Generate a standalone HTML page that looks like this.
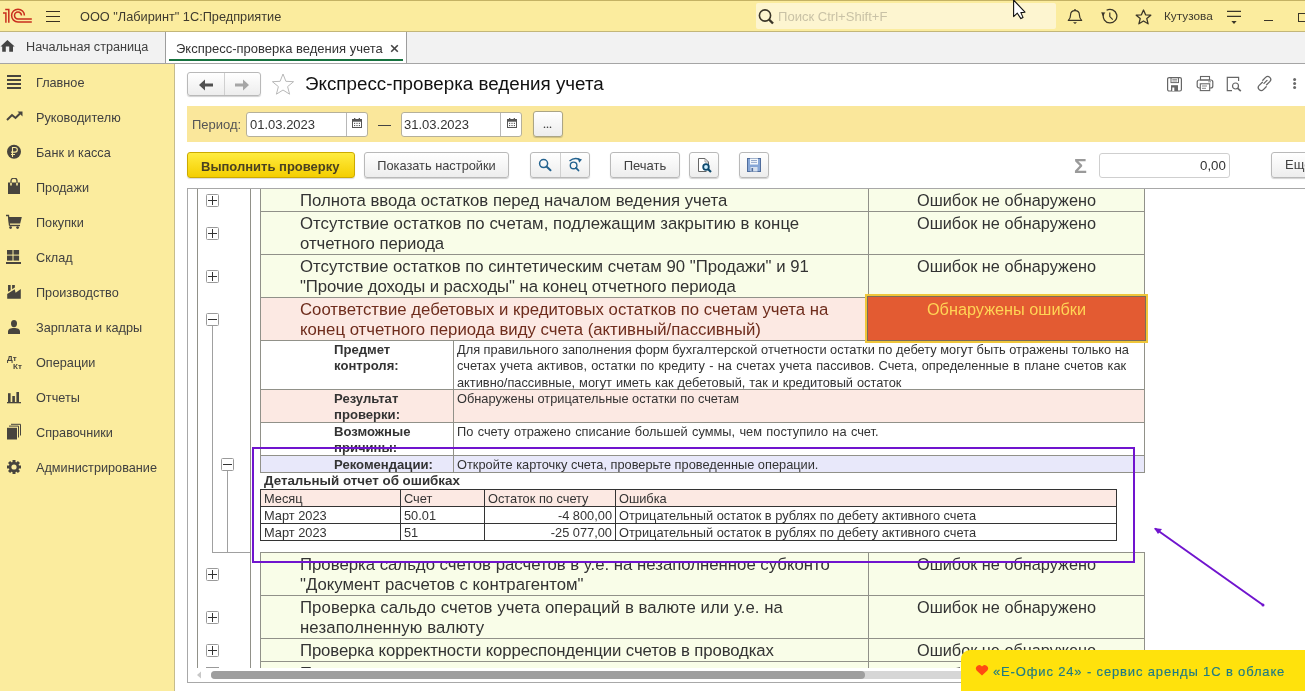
<!DOCTYPE html>
<html><head><meta charset="utf-8">
<style>
*{box-sizing:border-box;margin:0;padding:0}
html,body{width:1305px;height:691px;overflow:hidden;background:#fff;font-family:"Liberation Sans",sans-serif;color:#333}
.a{position:absolute}
.t{position:absolute;white-space:nowrap}
.a,.t,.si,.rowtxt,.ok,.lbl,.val,.btn{will-change:transform}
#top{left:0;top:0;width:1305px;height:32px;background:#FBEC9E;border-top:1px solid #C4B264;border-bottom:1px solid #C3B679}
#tabs{left:0;top:32px;width:1305px;height:32px;background:#F2F2F2;border-bottom:1px solid #A5A5A5}
#side{left:0;top:64px;width:175px;height:627px;background:#FBEC9E;border-right:1px solid #C6BC8C}
.si{position:absolute;left:36px;font-size:12.7px;color:#404040;white-space:nowrap}
.btn{position:absolute;border:1px solid #B9B9B9;border-radius:3px;background:linear-gradient(#FFFFFF,#EDEDED);box-shadow:0 1px 1px rgba(0,0,0,.18);font-size:13px;color:#404040;text-align:center}
.grid{position:absolute;background:#999}
.rowtxt{position:absolute;font-size:16.75px;color:#333;white-space:nowrap;line-height:20px}
.ok{position:absolute;font-size:16.3px;color:#333;white-space:nowrap;text-align:center;line-height:20px}
.lbl{position:absolute;font-size:13.1px;font-weight:bold;color:#333;line-height:16px}
.val{position:absolute;font-size:12.8px;color:#333;line-height:16.4px;white-space:nowrap}
.box{position:absolute;width:13px;height:13px;border:1px solid #9A9A9A;border-radius:1.5px;background:#fff}
.box:before{content:"";position:absolute;left:1.2px;top:4.9px;width:8.6px;height:1.3px;background:#333}
.box.p:after{content:"";position:absolute;left:4.85px;top:1.2px;width:1.3px;height:8.6px;background:#333}
</style></head><body>

<!-- TOP BAR -->
<div id="top" class="a"></div>
<svg class="a" style="left:0px;top:4px" width="36" height="24" viewBox="0 0 36 24"><g fill="none" stroke="#C92E1E" stroke-width="1.5"><path d="M3 9 H5.9 V18.8 M5.2 5.6 H8.8 V18.8"/><path d="M31.8 18 H18 A6.4 6.4 0 1 1 24.4 11.6"/><path d="M31.8 15.1 H18 A3.5 3.5 0 1 1 21.5 11.6"/></g></svg>
<div class="a" style="left:46px;top:10.7px;width:14px;height:1.3px;background:#3a3020"></div>
<div class="a" style="left:46px;top:15.7px;width:14px;height:1.3px;background:#3a3020"></div>
<div class="a" style="left:46px;top:20.7px;width:14px;height:1.3px;background:#3a3020"></div>
<div class="t" style="left:80px;top:9px;font-size:12.75px;color:#3E3A2E">ООО "Лабиринт" 1С:Предприятие</div>

<div class="a" style="left:756px;top:3px;width:300px;height:26px;background:#FDF5D0;border-radius:2px"></div>
<svg class="a" style="left:758px;top:9px" width="17" height="16" viewBox="0 0 17 16"><circle cx="7" cy="6.5" r="5.6" fill="none" stroke="#3a3528" stroke-width="1.6"/><path d="M11 10.5 L15 14.5" stroke="#3a3528" stroke-width="2.4"/></svg>
<div class="t" style="left:778px;top:9px;font-size:13.05px;color:#C9C2A6">Поиск Ctrl+Shift+F</div>

<!-- cursor -->
<svg class="a" style="left:1012px;top:0px" width="15" height="20" viewBox="0 0 15 20"><path d="M1.6 0 V16.6 L5.3 13.2 L8.9 18.6 L11 17.4 L8.9 12.6 L13 12.2 Z" fill="#fff" stroke="#111" stroke-width="1.1" stroke-linejoin="round"/></svg>
<!-- bell -->
<svg class="a" style="left:1067px;top:8px" width="16" height="17" viewBox="0 0 16 17"><circle cx="8" cy="1.8" r="0.9" fill="#3a3528"/><path d="M1.3 12.4 C3 10.8 3.6 9.2 3.6 6.8 C3.6 4.3 5.6 2.7 8 2.7 C10.4 2.7 12.4 4.3 12.4 6.8 C12.4 9.2 13 10.8 14.7 12.4 Z" fill="none" stroke="#3a3528" stroke-width="1.2" stroke-linejoin="round"/><path d="M6 14.2 H10 L8 15.9 Z" fill="#3a3528"/></svg>
<!-- history -->
<svg class="a" style="left:1100px;top:8px" width="18" height="17" viewBox="0 0 18 17"><path d="M3.6 6 A6.8 6.8 0 1 0 6.6 2.3" fill="none" stroke="#3a3528" stroke-width="1.3"/><path d="M1.2 4.2 L5.4 4.6 L2.6 8 Z" fill="#3a3528"/><path d="M9.8 4.6 V8.6 L12.8 11.6" fill="none" stroke="#3a3528" stroke-width="1.2"/></svg>
<!-- star -->
<svg class="a" style="left:1135px;top:8.5px" width="17" height="16" viewBox="0 0 17 16"><path d="M8.5 1 L10.6 5.8 L15.8 6.2 L11.8 9.6 L13.1 14.8 L8.5 12 L3.9 14.8 L5.2 9.6 L1.2 6.2 L6.4 5.8 Z" fill="none" stroke="#3a3528" stroke-width="1.3" stroke-linejoin="round"/></svg>
<div class="t" style="left:1164px;top:9px;font-size:11.8px;color:#3E3A2E">Кутузова</div>
<!-- filter -->
<svg class="a" style="left:1226px;top:9px" width="16" height="16" viewBox="0 0 16 16"><path d="M1 2.4 H15 M1 7.3 H15" stroke="#3a3528" stroke-width="1.2"/><path d="M5.4 12 H10.6 L8 15 Z" fill="#3a3528"/></svg>
<div class="a" style="left:1264px;top:20px;width:9px;height:1.2px;background:#3a3528"></div>
<div class="a" style="left:1298px;top:12.5px;width:10px;height:8.5px;border:1.2px solid #3a3528"></div>

<!-- TAB BAR -->
<div id="tabs" class="a"></div>
<svg class="a" style="left:0px;top:40px" width="16" height="13" viewBox="0 0 16 13"><path d="M7.4 0 L14.7 6.6 H13 V11.8 H9.2 V6.6 H5.8 V11.8 H2.2 V6.6 H0.5 Z" fill="#454545"/></svg>
<div class="t" style="left:26px;top:39.5px;font-size:12.65px;color:#404040">Начальная страница</div>
<div class="a" style="left:165px;top:32px;width:242px;height:31px;background:#fff;border-left:1px solid #9d9d9d;border-right:1px solid #9d9d9d"></div>
<div class="t" style="left:176px;top:40.5px;font-size:13px;color:#333">Экспресс-проверка ведения учета</div>
<svg class="a" style="left:390px;top:43.5px" width="9" height="9" viewBox="0 0 9 9"><path d="M1.2 1.2 L7.8 7.8 M7.8 1.2 L1.2 7.8" stroke="#444" stroke-width="1.6"/></svg>
<div class="a" style="left:169px;top:59px;width:234px;height:2px;background:#17723F"></div>

<!-- SIDEBAR -->
<div id="side" class="a"></div>
<div class="si" style="top:76px">Главное</div>
<div class="si" style="top:111px">Руководителю</div>
<div class="si" style="top:146px">Банк и касса</div>
<div class="si" style="top:181px">Продажи</div>
<div class="si" style="top:216px">Покупки</div>
<div class="si" style="top:251px">Склад</div>
<div class="si" style="top:286px">Производство</div>
<div class="si" style="top:321px">Зарплата и кадры</div>
<div class="si" style="top:356px">Операции</div>
<div class="si" style="top:391px">Отчеты</div>
<div class="si" style="top:426px">Справочники</div>
<div class="si" style="top:461px">Администрирование</div>


<!-- sidebar icons -->
<svg class="a" style="left:6px;top:74px" width="17" height="16" viewBox="0 0 17 16"><path d="M1 2.1 H15 M1 6 H15 M1 9.9 H15 M1 14 H15" stroke="#47443E" stroke-width="2"/></svg>
<svg class="a" style="left:6px;top:110px" width="18" height="12" viewBox="0 0 18 12"><path d="M1 10 L6 5 L9.5 8 L14 3.5" fill="none" stroke="#47443E" stroke-width="2"/><path d="M11.5 1.5 H16.5 V6.5 Z" fill="#47443E"/></svg>
<svg class="a" style="left:6px;top:144px" width="16" height="16" viewBox="0 0 16 16"><circle cx="8" cy="7.8" r="7" fill="#47443E"/><path d="M6.5 13 V3.5 H9 A2.3 2.3 0 0 1 9 8.1 H5 M5 10.5 H9" fill="none" stroke="#FBEC9E" stroke-width="1.1"/></svg>
<svg class="a" style="left:6px;top:178px" width="16" height="17" viewBox="0 0 16 17"><path d="M5 5 V3 A3 3 0 0 1 11 3 V5" fill="none" stroke="#47443E" stroke-width="1.3"/><path d="M2 4.5 H4.2 V7.5 H5.8 V4.5 H10.2 V7.5 H11.8 V4.5 H14 V16 H2 Z" fill="#47443E"/></svg>
<svg class="a" style="left:5px;top:214px" width="18" height="16" viewBox="0 0 18 16"><path d="M1 1.5 H3.5 L4.5 11.5" fill="none" stroke="#47443E" stroke-width="1.3"/><path d="M3.2 3 H16.8 L15.2 9.5 H4 Z" fill="#47443E"/><path d="M4.3 11.5 H15" stroke="#47443E" stroke-width="1.4"/><circle cx="5.6" cy="13.6" r="1.4" fill="#47443E"/><circle cx="12.6" cy="13.6" r="1.4" fill="#47443E"/></svg>
<svg class="a" style="left:5px;top:249px" width="18" height="16" viewBox="0 0 18 16"><rect x="2" y="1" width="5.5" height="4.6" fill="#47443E"/><rect x="8.5" y="1" width="5.6" height="4.6" fill="#47443E"/><rect x="2" y="6.6" width="5.5" height="5" fill="#47443E"/><rect x="8.5" y="6.6" width="5.6" height="5" fill="#47443E"/><rect x="1" y="13" width="15" height="2" fill="#47443E"/></svg>
<svg class="a" style="left:6px;top:284px" width="16" height="16" viewBox="0 0 16 16"><path d="M2.05 1 H4.65 V6.14 L2.05 7.77 Z M6.1 1 H8.85 V3.5 L6.1 5.23 Z M1.2 14.8 V9.9 L8.7 5.2 L9.6 8.7 L14.8 5 V14.8 Z" fill="#47443E"/></svg>
<svg class="a" style="left:6px;top:319px" width="16" height="16" viewBox="0 0 16 16"><ellipse cx="8" cy="4.6" rx="3" ry="3.6" fill="#47443E"/><path d="M2 15 V12.5 C2 10 4.5 9 8 9 C11.5 9 14 10 14 12.5 V15 Z" fill="#47443E"/></svg>
<div class="t" style="left:7px;top:354px;font-size:8px;font-weight:bold;color:#47443E">Дт</div>
<div class="t" style="left:13px;top:362px;font-size:8px;font-weight:bold;color:#47443E">Кт</div>
<svg class="a" style="left:6px;top:390px" width="16" height="14" viewBox="0 0 16 14"><rect x="2" y="3.2" width="2.6" height="9" fill="#47443E"/><rect x="6.3" y="6" width="2.6" height="6.2" fill="#47443E"/><rect x="10.4" y="2" width="2.6" height="10.2" fill="#47443E"/><rect x="1" y="12" width="14" height="1.3" fill="#47443E"/></svg>
<svg class="a" style="left:6px;top:422px" width="16" height="19" viewBox="0 0 16 19"><rect x="1" y="5.8" width="10" height="11.7" fill="#47443E"/><path d="M3 4.1 H12.5 V15.5 M5 2.3 H14.5 V13.5" fill="none" stroke="#47443E" stroke-width="1"/></svg>
<svg class="a" style="left:6px;top:459px" width="16" height="16" viewBox="0 0 16 16"><g fill="#47443E"><rect x="6.5" y="1" width="3" height="14"/><rect x="1" y="6.5" width="14" height="3"/><rect x="6.5" y="1" width="3" height="14" transform="rotate(45 8 8)"/><rect x="6.5" y="1" width="3" height="14" transform="rotate(-45 8 8)"/><circle cx="8" cy="8" r="5.2"/></g><circle cx="8" cy="8" r="2.6" fill="#FBEC9E"/></svg>

<!-- CONTENT HEADER -->
<div class="btn" style="left:187px;top:72px;width:74px;height:24px;border-radius:3px"></div>
<div class="a" style="left:224px;top:73px;width:1px;height:22px;background:#D0D0D0"></div>
<svg class="a" style="left:198px;top:77.6px" width="18" height="14" viewBox="0 0 18 14"><path d="M1 7 L7 1.5 V5.5 H15 V8.5 H7 V12.5 Z" fill="#505050"/></svg>
<svg class="a" style="left:232px;top:77.6px" width="18" height="14" viewBox="0 0 18 14"><path d="M17 7 L11 1.5 V5.5 H3 V8.5 H11 V12.5 Z" fill="#A6A6A6"/></svg>
<svg class="a" style="left:271px;top:73px" width="24" height="23" viewBox="0 0 24 23"><path d="M12 1 L14.9 8.3 L22.6 8.7 L16.6 13.6 L18.6 21.2 L12 17 L5.4 21.2 L7.4 13.6 L1.4 8.7 L9.1 8.3 Z" fill="none" stroke="#B8B8B8" stroke-width="1" stroke-linejoin="round"/></svg>
<div class="t" style="left:305px;top:73px;font-size:18.8px;color:#111">Экспресс-проверка ведения учета</div>

<!-- right header icons -->
<svg class="a" style="left:1166px;top:76px" width="17" height="16" viewBox="0 0 17 16"><rect x="1.6" y="1.6" width="13.8" height="13.4" rx="1.5" fill="none" stroke="#666" stroke-width="1.2"/><rect x="5" y="1.6" width="7.5" height="5" fill="none" stroke="#666" stroke-width="1"/><path d="M6.3 3.6 H11.2 M6.3 5 H11.2" stroke="#666" stroke-width="0.7"/><rect x="5" y="9.2" width="7" height="5.8" fill="#666"/><rect x="6.3" y="11.5" width="2" height="3.5" fill="#fff"/></svg>
<svg class="a" style="left:1196px;top:75px" width="18" height="17" viewBox="0 0 18 17"><rect x="4.5" y="1.5" width="9" height="3.5" fill="none" stroke="#666" stroke-width="1.1"/><rect x="1.2" y="5" width="15.6" height="8" rx="2" fill="none" stroke="#666" stroke-width="1.2"/><rect x="4.3" y="8.8" width="9.4" height="6.8" fill="#fff" stroke="#666" stroke-width="1.1"/><path d="M6 11 H11 M6 13.3 H10" stroke="#666" stroke-width="0.8"/><path d="M12.2 6.8 H15" stroke="#666" stroke-width="0.8"/></svg>
<svg class="a" style="left:1226px;top:76px" width="17" height="16" viewBox="0 0 17 16"><path d="M6 14.6 H1.3 V1.3 H12.6 V5" fill="none" stroke="#666" stroke-width="1.2"/><circle cx="9.5" cy="10" r="3" fill="none" stroke="#666" stroke-width="1.2"/><path d="M11.8 12.3 L14.8 15.2" stroke="#666" stroke-width="1.6"/></svg>
<svg class="a" style="left:1256px;top:75px" width="17" height="17" viewBox="0 0 17 17"><path d="M6.8 5.2 L9.6 2.4 A2.8 2.8 0 0 1 13.8 6.6 L10.6 9.8 M8 8.4 L11 5.4 M10.2 11.8 L7.4 14.6 A2.8 2.8 0 0 1 3.2 10.4 L6.4 7.2" fill="none" stroke="#666" stroke-width="1.3" stroke-linecap="round"/></svg>
<svg class="a" style="left:1292px;top:76px" width="6" height="14" viewBox="0 0 6 14"><circle cx="2.6" cy="3.4" r="1.5" fill="#6a6a6a"/><circle cx="2.6" cy="7.4" r="1.5" fill="#6a6a6a"/><circle cx="2.6" cy="11.4" r="1.5" fill="#6a6a6a"/></svg>

<!-- PERIOD PANEL -->
<div class="a" style="left:187px;top:106px;width:1118px;height:36px;background:#FAE79B"></div>
<div class="t" style="left:192px;top:117px;font-size:13px;color:#555">Период:</div>
<div class="a" style="left:246px;top:112px;width:122px;height:25px;background:#fff;border:1px solid #B5B09A;border-radius:3px"></div>
<div class="a" style="left:346px;top:113px;width:1px;height:23px;background:#B8B8B8"></div>
<div class="t" style="left:250px;top:117px;font-size:13px;color:#333">01.03.2023</div>
<div class="a" style="left:401px;top:112px;width:121px;height:25px;background:#fff;border:1px solid #B5B09A;border-radius:3px"></div>
<div class="a" style="left:500px;top:113px;width:1px;height:23px;background:#B8B8B8"></div>
<div class="t" style="left:404px;top:117px;font-size:13px;color:#333">31.03.2023</div>
<div class="a" style="left:378px;top:124.5px;width:13px;height:1px;background:#444"></div>
<div class="btn" style="left:533px;top:111px;width:30px;height:26px;border-color:#ABA585"></div>
<svg class="a" style="left:540px;top:124px" width="14" height="6" viewBox="0 0 14 6"><circle cx="4.5" cy="3.3" r="0.8" fill="#333"/><circle cx="7.5" cy="3.3" r="0.8" fill="#333"/><circle cx="10.5" cy="3.3" r="0.8" fill="#333"/></svg>


<svg class="a" style="left:352px;top:118px" width="10" height="10" viewBox="0 0 10 10"><rect x="0.5" y="1.5" width="9" height="8" fill="#fff" stroke="#555" stroke-width="1"/><rect x="0.5" y="1.5" width="9" height="2.2" fill="#555"/><rect x="2" y="0" width="1.3" height="2" fill="#555"/><rect x="6.7" y="0" width="1.3" height="2" fill="#555"/><g fill="#555"><rect x="2" y="4.8" width="1.2" height="1.1"/><rect x="4.4" y="4.8" width="1.2" height="1.1"/><rect x="6.8" y="4.8" width="1.2" height="1.1"/><rect x="2" y="7" width="1.2" height="1.1"/><rect x="4.4" y="7" width="1.2" height="1.1"/><rect x="6.8" y="7" width="1.2" height="1.1"/></g></svg>
<svg class="a" style="left:507px;top:118px" width="10" height="10" viewBox="0 0 10 10"><rect x="0.5" y="1.5" width="9" height="8" fill="#fff" stroke="#555" stroke-width="1"/><rect x="0.5" y="1.5" width="9" height="2.2" fill="#555"/><rect x="2" y="0" width="1.3" height="2" fill="#555"/><rect x="6.7" y="0" width="1.3" height="2" fill="#555"/><g fill="#555"><rect x="2" y="4.8" width="1.2" height="1.1"/><rect x="4.4" y="4.8" width="1.2" height="1.1"/><rect x="6.8" y="4.8" width="1.2" height="1.1"/><rect x="2" y="7" width="1.2" height="1.1"/><rect x="4.4" y="7" width="1.2" height="1.1"/><rect x="6.8" y="7" width="1.2" height="1.1"/></g></svg>
<!-- ACTION BAR -->
<div class="a" style="left:187px;top:152px;width:168px;height:26px;border:1px solid #CCAA00;border-radius:3px;background:linear-gradient(#FFEC40,#F4CE00);box-shadow:0 1px 1px rgba(0,0,0,.15)"></div>
<div class="t" style="left:201px;top:158.5px;font-size:13px;font-weight:bold;color:#4A4220">Выполнить проверку</div>
<div class="btn" style="left:364px;top:152px;width:145px;height:26px;line-height:25.5px;font-size:12.8px">Показать настройки</div>
<div class="btn" style="left:530px;top:152px;width:60px;height:26px"></div>
<div class="a" style="left:560px;top:153px;width:1px;height:24px;background:#D0D0D0"></div>
<div class="btn" style="left:610px;top:152px;width:70px;height:26px;line-height:26px">Печать</div>
<div class="btn" style="left:689px;top:152px;width:30px;height:26px"></div>
<div class="btn" style="left:739px;top:152px;width:30px;height:26px"></div>
<div class="t" style="left:1074px;top:154.5px;font-size:19.5px;font-weight:bold;color:#9A9A9A;transform:scaleX(1.1);transform-origin:left">Σ</div>
<div class="a" style="left:1099px;top:153px;width:131px;height:25px;background:#fff;border:1px solid #CFCFCF;border-radius:3px"></div>
<div class="t" style="left:1200px;top:158px;font-size:13.3px;color:#333">0,00</div>
<div class="btn" style="left:1271px;top:152px;width:60px;height:26px;line-height:24px;text-align:left;padding-left:13px">Ещё</div>
<svg class="a" style="left:538px;top:157px" width="15" height="16" viewBox="0 0 15 16"><circle cx="5.6" cy="6.6" r="4" fill="none" stroke="#23628F" stroke-width="1.5"/><path d="M8.5 9.5 L12.5 13.3" stroke="#23628F" stroke-width="2" stroke-linecap="round"/></svg>
<svg class="a" style="left:567px;top:156px" width="17" height="17" viewBox="0 0 17 17"><circle cx="6.6" cy="9.4" r="3.3" fill="none" stroke="#23628F" stroke-width="1.4"/><path d="M9 11.8 L11.5 14.5" stroke="#23628F" stroke-width="1.8" stroke-linecap="round"/><path d="M2.5 5 Q7.5 0.8 12.5 3.6" fill="none" stroke="#23628F" stroke-width="1.5"/><path d="M10.6 2 L15 3.5 L12.2 6.8 Z" fill="#23628F"/></svg>
<svg class="a" style="left:697px;top:157px" width="16" height="17" viewBox="0 0 16 17"><path d="M9.5 14.5 H1.5 V1.5 H8 L11.5 5 V8" fill="#fff" stroke="#666" stroke-width="1"/><path d="M8 1.5 V5 H11.5" fill="none" stroke="#888" stroke-width="0.8"/><circle cx="9" cy="10" r="2.8" fill="#CFEFFF" stroke="#0E4A6E" stroke-width="1.8"/><path d="M11 12 L14 15" stroke="#0E4A6E" stroke-width="2.2"/></svg>
<svg class="a" style="left:746px;top:157px" width="16" height="16" viewBox="0 0 16 16"><rect x="1.5" y="1.5" width="13" height="13" fill="#86A6D6" stroke="#4F6C9C" stroke-width="1"/><rect x="4" y="1.5" width="8" height="6" fill="#F4F8FC"/><path d="M5 3.5 H11 M5 5.4 H11" stroke="#7D96BE" stroke-width="0.8"/><rect x="4.5" y="10" width="7" height="4.5" fill="#D6E0EE"/><rect x="5.5" y="11" width="1.6" height="3.5" fill="#4F6C9C"/></svg>
<div class="a" style="left:187px;top:188px;width:1118px;height:495px;background:#fff;border:1px solid #A8A8A8;border-right:none"></div>
<div class="a" style="left:261px;top:189px;width:883px;height:22px;background:#F9FDE8;"></div>
<div class="a" style="left:261px;top:212px;width:883px;height:42px;background:#F9FDE8;"></div>
<div class="a" style="left:261px;top:255px;width:883px;height:42px;background:#F9FDE8;"></div>
<div class="a" style="left:261px;top:298px;width:883px;height:42px;background:#FCE9E3;"></div>
<div class="a" style="left:261px;top:553px;width:883px;height:42px;background:#F9FDE8;"></div>
<div class="a" style="left:261px;top:596px;width:883px;height:42px;background:#F9FDE8;"></div>
<div class="a" style="left:261px;top:639px;width:883px;height:22px;background:#F9FDE8;"></div>
<div class="a" style="left:261px;top:662px;width:883px;height:6px;background:#F9FDE8;"></div>
<div class="a" style="left:261px;top:390px;width:883px;height:32px;background:#FCE9E3;"></div>
<div class="a" style="left:261px;top:456px;width:883px;height:16px;background:#E8E8FA;"></div>
<div class="a" style="left:260px;top:211px;width:885px;height:1px;background:#919189;"></div>
<div class="a" style="left:260px;top:254px;width:885px;height:1px;background:#919189;"></div>
<div class="a" style="left:260px;top:297px;width:885px;height:1px;background:#919189;"></div>
<div class="a" style="left:260px;top:340px;width:885px;height:1px;background:#919189;"></div>
<div class="a" style="left:260px;top:552px;width:885px;height:1px;background:#919189;"></div>
<div class="a" style="left:260px;top:595px;width:885px;height:1px;background:#919189;"></div>
<div class="a" style="left:260px;top:638px;width:885px;height:1px;background:#919189;"></div>
<div class="a" style="left:260px;top:661px;width:885px;height:1px;background:#919189;"></div>
<div class="a" style="left:260px;top:389px;width:885px;height:1px;background:#919189;"></div>
<div class="a" style="left:260px;top:422px;width:885px;height:1px;background:#919189;"></div>
<div class="a" style="left:260px;top:455px;width:885px;height:1px;background:#919189;"></div>
<div class="a" style="left:260px;top:472px;width:885px;height:1px;background:#919189;"></div>
<div class="a" style="left:197px;top:189px;width:1px;height:479px;background:#919189;"></div>
<div class="a" style="left:250px;top:189px;width:1px;height:479px;background:#919189;"></div>
<div class="a" style="left:260px;top:189px;width:1px;height:283px;background:#919189;"></div><div class="a" style="left:260px;top:552px;width:1px;height:116px;background:#919189;"></div>
<div class="a" style="left:868px;top:189px;width:1px;height:151px;background:#919189;"></div>
<div class="a" style="left:868px;top:552px;width:1px;height:116px;background:#919189;"></div>
<div class="a" style="left:1144px;top:189px;width:1px;height:284px;background:#919189;"></div>
<div class="a" style="left:1144px;top:552px;width:1px;height:116px;background:#919189;"></div>
<div class="a" style="left:453px;top:340px;width:1px;height:132px;background:#919189;"></div>
<div class="box p" style="left:206px;top:194px"></div>
<div class="box p" style="left:206px;top:227px"></div>
<div class="box p" style="left:206px;top:270px"></div>
<div class="box" style="left:206px;top:313px"></div>
<div class="box" style="left:221px;top:458px"></div>
<div class="box p" style="left:206px;top:568px"></div>
<div class="box p" style="left:206px;top:611px"></div>
<div class="box p" style="left:206px;top:644px"></div>
<div class="a" style="left:212px;top:326px;width:1px;height:226px;background:#A0A0A0;"></div>
<div class="a" style="left:227px;top:471px;width:1px;height:81px;background:#A0A0A0;"></div>
<div class="a" style="left:212px;top:552px;width:38px;height:1px;background:#A0A0A0;"></div>
<div class="a" style="left:206px;top:667px;width:13px;height:1px;background:#9A9A9A;"></div>
<div class="rowtxt" style="left:300px;top:191px;">Полнота ввода остатков перед началом ведения учета</div>
<div class="rowtxt" style="left:300px;top:214px;letter-spacing:0.05px;">Отсутствие остатков по счетам, подлежащим закрытию в конце</div>
<div class="rowtxt" style="left:300px;top:233.7px;letter-spacing:-0.06px;">отчетного периода</div>
<div class="rowtxt" style="left:300px;top:257px;">Отсутствие остатков по синтетическим счетам 90 "Продажи" и 91</div>
<div class="rowtxt" style="left:300px;top:276.7px;letter-spacing:-0.071px;">"Прочие доходы и расходы" на конец отчетного периода</div>
<div class="rowtxt" style="left:300px;top:300px;color:#6E2C1C">Соответствие дебетовых и кредитовых остатков по счетам учета на</div>
<div class="rowtxt" style="left:300px;top:319.7px;color:#6E2C1C">конец отчетного периода виду счета (активный/пассивный)</div>
<div class="rowtxt" style="left:300px;top:555px;">Проверка сальдо счетов расчетов в у.е. на незаполненное субконто</div>
<div class="rowtxt" style="left:300px;top:574.7px;">"Документ расчетов с контрагентом"</div>
<div class="rowtxt" style="left:300px;top:598px;letter-spacing:0.07px;">Проверка сальдо счетов учета операций в валюте или у.е. на</div>
<div class="rowtxt" style="left:300px;top:617.7px;letter-spacing:0.116px;">незаполненную валюту</div>
<div class="rowtxt" style="left:300px;top:641px;letter-spacing:-0.119px;">Проверка корректности корреспонденции счетов в проводках</div>
<div class="rowtxt" style="left:300px;top:663.5px;">Проверка сальдо счетов расчетов</div>
<div class="ok" style="left:869px;top:663.5px;width:275px">Ошибок не обнаружено</div>
<div class="ok" style="left:869px;top:190px;width:275px">Ошибок не обнаружено</div>
<div class="ok" style="left:869px;top:213px;width:275px">Ошибок не обнаружено</div>
<div class="ok" style="left:869px;top:256px;width:275px">Ошибок не обнаружено</div>
<div class="ok" style="left:869px;top:554px;width:275px">Ошибок не обнаружено</div>
<div class="ok" style="left:869px;top:597px;width:275px">Ошибок не обнаружено</div>
<div class="ok" style="left:869px;top:640px;width:275px">Ошибок не обнаружено</div>
<div class="a" style="left:865px;top:294px;width:283px;height:49px;background:#E35B32;border:2px solid #EFC63A;box-shadow:inset 0 0 0 1px #7d6c58"></div>
<div class="ok" style="left:869px;top:299px;width:275px;color:#FFD455">Обнаружены ошибки</div>
<div class="lbl" style="left:334px;top:342px;">Предмет<br>контроля:</div>
<div class="lbl" style="left:334px;top:391px;">Результат<br>проверки:</div>
<div class="lbl" style="left:334px;top:424px;">Возможные<br>причины:</div>
<div class="lbl" style="left:334px;top:457px;">Рекомендации:</div>
<div class="val" style="left:457px;top:342px;">Для правильного заполнения форм бухгалтерской отчетности остатки по дебету могут быть отражены только на</div>
<div class="val" style="left:457px;top:358.4px;word-spacing:0.7px">счетах учета активов, остатки по кредиту - на счетах учета пассивов. Счета, определенные в плане счетов как</div>
<div class="val" style="left:457px;top:374.8px;word-spacing:0.4px">активно/пассивные, могут иметь как дебетовый, так и кредитовый остаток</div>
<div class="val" style="left:457px;top:391px;">Обнаружены отрицательные остатки по счетам</div>
<div class="val" style="left:457px;top:424px;word-spacing:0.8px">По счету отражено списание большей суммы, чем поступило на счет.</div>
<div class="val" style="left:457px;top:457px;">Откройте карточку счета, проверьте проведенные операции.</div>
<div class="lbl" style="left:264px;top:473px;white-space:nowrap;font-size:13.35px">Детальный отчет об ошибках</div>
<div class="a" style="left:260px;top:489px;width:857px;height:52px;background:#fff;border:1px solid #333"></div>
<div class="a" style="left:261px;top:490px;width:855px;height:16px;background:#FCE9E3;"></div>
<div class="a" style="left:260px;top:506px;width:857px;height:1px;background:#333;"></div>
<div class="a" style="left:260px;top:523px;width:857px;height:1px;background:#333;"></div>
<div class="a" style="left:400px;top:489px;width:1px;height:52px;background:#333;"></div>
<div class="a" style="left:484px;top:489px;width:1px;height:52px;background:#333;"></div>
<div class="a" style="left:615px;top:489px;width:1px;height:52px;background:#333;"></div>
<div class="val" style="left:264px;top:491px;">Месяц</div>
<div class="val" style="left:404px;top:491px;">Счет</div>
<div class="val" style="left:488px;top:491px;">Остаток по счету</div>
<div class="val" style="left:619px;top:491px;">Ошибка</div>
<div class="val" style="left:264px;top:508px;">Март 2023</div>
<div class="val" style="left:404px;top:508px;">50.01</div>
<div class="val" style="left:484px;top:508px;width:128px;text-align:right">-4 800,00</div>
<div class="val" style="left:619px;top:508px;">Отрицательный остаток в рублях по дебету активного счета</div>
<div class="val" style="left:264px;top:525px;">Март 2023</div>
<div class="val" style="left:404px;top:525px;">51</div>
<div class="val" style="left:484px;top:525px;width:128px;text-align:right">-25 077,00</div>
<div class="val" style="left:619px;top:525px;">Отрицательный остаток в рублях по дебету активного счета</div>
<div class="a" style="left:252px;top:447px;width:883px;height:116px;background:transparent;border:2px solid #7014CE"></div>
<svg class="a" style="left:1145px;top:520px" width="125" height="92" viewBox="0 0 125 92"><path d="M10 8.5 L118 85" stroke="#7014CE" stroke-width="2"/><path d="M9 8 L17 9 L13 14 Z" fill="#7014CE"/><circle cx="118" cy="85" r="1.5" fill="#7014CE"/></svg>
<div class="a" style="left:198px;top:668px;width:1107px;height:14px;background:#fff;"></div>
<div class="a" style="left:211px;top:671px;width:1094px;height:8px;background:#D6D6D6;border-radius:4px 0 0 4px"></div>
<div class="a" style="left:211px;top:671px;width:654px;height:8px;background:#9E9E9E;border-radius:4px"></div>
<svg class="a" style="left:196px;top:671px" width="6" height="8" viewBox="0 0 6 8"><path d="M5 0.5 V7.5 L1 4 Z" fill="#C8C8C8"/></svg>
<div class="a" style="left:961px;top:650px;width:344px;height:41px;background:#FFE20C;border-radius:9px 0 0 0"></div>
<svg class="a" style="left:975px;top:665px" width="14" height="11" viewBox="0 0 14 11"><path d="M7 10.6 L1.6 5.4 A3.1 3.1 0 0 1 7 1.6 A3.1 3.1 0 0 1 12.4 5.4 Z" fill="#FF4A12"/></svg>
<div class="t" style="left:993px;top:663.5px;font-size:13px;letter-spacing:0.85px;-webkit-text-stroke:0.15px #1F7B84;color:#1F7B84">«Е-Офис 24» - сервис аренды 1С в облаке</div>
</body></html>
